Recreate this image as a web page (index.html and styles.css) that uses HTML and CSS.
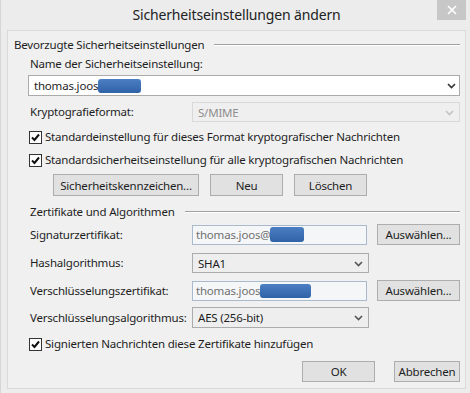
FILE: index.html
```html
<!DOCTYPE html>
<html lang="de">
<head>
<meta charset="utf-8">
<title>Sicherheitseinstellungen ändern</title>
<link rel="stylesheet" href="styles.css">
</head>
<body>
<div class="window">
  <div class="titlebar">
    <div class="title">Sicherheitseinstellungen ändern</div>
    <div class="close"><svg width="10" height="10" viewBox="0 0 10 10"><path d="M1 1 L9 9 M9 1 L1 9" stroke="#fff" stroke-width="1.6" fill="none"/></svg></div>
  </div>
  <div class="panel">
    <div class="group-head"><span>Bevorzugte Sicherheitseinstellungen</span><i class="rule"></i></div>
    <div class="group">
      <div class="label name-label">Name der Sicherheitseinstellung:</div>
      <div class="combo edit name-combo">
        <span class="val">thomas.joos</span><span class="redact r1"></span>
        <svg class="chev" width="9" height="6" viewBox="0 0 9 6"><path d="M1 1 L4.5 4.5 L8 1" stroke="#333" stroke-width="1.6" fill="none"/></svg>
      </div>
      <div class="row krypto">
        <span class="label col">Kryptografieformat:</span>
        <div class="combo disabled wide">
          <span class="val">S/MIME</span>
          <svg class="chev" width="9" height="6" viewBox="0 0 9 6"><path d="M1 1 L4.5 4.5 L8 1" stroke="#c4c4c4" stroke-width="1.6" fill="none"/></svg>
        </div>
      </div>
      <div class="check c1"><span class="box"><svg width="11" height="11" viewBox="0 0 11 11"><path d="M2 5.5 L4.5 8 L9 2.5" stroke="#111" stroke-width="2" fill="none"/></svg></span>Standardeinstellung für dieses Format kryptografischer Nachrichten</div>
      <div class="check c2"><span class="box"><svg width="11" height="11" viewBox="0 0 11 11"><path d="M2 5.5 L4.5 8 L9 2.5" stroke="#111" stroke-width="2" fill="none"/></svg></span>Standardsicherheitseinstellung für alle kryptografischen Nachrichten</div>
      <div class="btnrow">
        <div class="btn b-kenn">Sicherheitskennzeichen...</div>
        <div class="btn b-std">Neu</div>
        <div class="btn b-std">Löschen</div>
      </div>
    </div>
    <div class="group-head head2"><span>Zertifikate und Algorithmen</span><i class="rule"></i></div>
    <div class="group">
      <div class="row r-sig">
        <span class="label col">Signaturzertifikat:</span>
        <div class="field"><span class="val">thomas.joos@</span><span class="redact r2"></span></div>
        <div class="btn b-ausw">Auswählen...</div>
      </div>
      <div class="row r-hash">
        <span class="label col">Hashalgorithmus:</span>
        <div class="combo list">
          <span class="val">SHA1</span>
          <svg class="chev" width="9" height="6" viewBox="0 0 9 6"><path d="M1 1 L4.5 4.5 L8 1" stroke="#555" stroke-width="1.6" fill="none"/></svg>
        </div>
      </div>
      <div class="row r-enc">
        <span class="label col">Verschlüsselungszertifikat:</span>
        <div class="field"><span class="val">thomas.joos</span><span class="redact r3"></span></div>
        <div class="btn b-ausw">Auswählen...</div>
      </div>
      <div class="row r-algo">
        <span class="label col">Verschlüsselungsalgorithmus:</span>
        <div class="combo list tall">
          <span class="val">AES (256-bit)</span>
          <svg class="chev" width="9" height="6" viewBox="0 0 9 6"><path d="M1 1 L4.5 4.5 L8 1" stroke="#555" stroke-width="1.6" fill="none"/></svg>
        </div>
      </div>
      <div class="check c3"><span class="box"><svg width="11" height="11" viewBox="0 0 11 11"><path d="M2 5.5 L4.5 8 L9 2.5" stroke="#111" stroke-width="2" fill="none"/></svg></span>Signierten Nachrichten diese Zertifikate hinzufügen</div>
      <div class="footer">
        <div class="btn b-ok">OK</div>
        <div class="btn b-cancel">Abbrechen</div>
      </div>
    </div>
  </div>
</div>
</body>
</html>
```
FILE: styles.css
```css
* { box-sizing: border-box; }
html, body { margin: 0; padding: 0; }
body {
  width: 470px;
  height: 393px;
  background: #ececec;
  font-family: "Noto Sans", "Open Sans", sans-serif;
  font-size: 11.5px;
  letter-spacing: -0.2px;
  color: #1e1e1e;
  overflow: hidden;
}
.window {
  width: 470px;
  height: 393px;
  border-left: 1px solid #d6d6d6;
  display: flex;
  flex-direction: column;
}
.titlebar {
  height: 30px;
  display: flex;
  align-items: flex-start;
  position: relative;
}
.title {
  flex: 1;
  text-align: center;
  font-size: 14px;
  letter-spacing: -0.15px;
  line-height: 30px;
  color: #222;
  padding-left: 2px;
}
.close {
  position: absolute;
  top: 0;
  right: 4px;
  width: 29px;
  height: 20px;
  background: #c7c7c7;
  display: flex;
  align-items: center;
  justify-content: center;
}
.panel {
  margin-left: 6px;
  width: 459px;
  height: 359px;
  border: 1px solid #dadada;
  background: #f0f0f0;
  padding: 6px 5px 0 6px;
  display: flex;
  flex-direction: column;
}
.group-head {
  height: 16px;
  line-height: 16px;
  display: flex;
  align-items: center;
  gap: 10px;
}
.group-head .rule {
  flex: 1;
  height: 2px;
  border-top: 1px solid #a0a0a0;
  border-bottom: 1px solid #fff;
}
.head2 { margin-top: 8px; padding-left: 16px; }
.group {
  padding-left: 14px;
  display: flex;
  flex-direction: column;
}
.label { line-height: 16px; white-space: nowrap; }
.name-label { margin-top: 3px; padding-left: 2px; }
.col { width: 164px; padding-left: 2px; flex: none; }
.row { display: flex; align-items: center; }
.combo, .field {
  position: relative;
  display: flex;
  align-items: center;
  height: 20px;
  padding-left: 5px;
  white-space: nowrap;
}
.combo .chev { position: absolute; right: 5px; top: 7px; }
.edit {
  margin-top: 3px;
  height: 21px;
  background: #fff;
  border: 1px solid #ababab;
}
.edit .chev { top: 7px; right: 3px; }
.krypto { margin-top: 6px; }
.disabled {
  width: 269px;
  background: #efefef;
  border: 1px solid #d9d9d9;
  color: #8e8e8e;
}
.list {
  width: 177px;
  background: #eeeeee;
  border: 1px solid #acacac;
}
.tall { height: 21px; }
.field {
  width: 177px;
  background: #f4f6f8;
  border: 1px solid #a9bacd;
  color: #707070;
  padding-left: 3px;
}
.redact {
  display: inline-block;
  background: linear-gradient(#4b7ec2, #2f62a6);
  border-radius: 3px;
}
.r1 { width: 43px; height: 14px; }
.r2 { width: 34px; height: 15px; }
.r3 { width: 51px; height: 14px; }
.check {
  display: flex;
  align-items: center;
  height: 16px;
  line-height: 16px;
  white-space: nowrap;
}
.check .box {
  width: 13px;
  height: 13px;
  border: 1px solid #333;
  background: #fff;
  margin-left: 1px;
  margin-right: 3px;
  display: flex;
  align-items: center;
  justify-content: center;
  flex: none;
}
.c1 { margin-top: 7px; }
.c2 { margin-top: 7px; }
.c3 { margin-top: 8px; }
.btn {
  height: 21px;
  background: #e1e1e1;
  border: 1px solid #adadad;
  display: flex;
  align-items: center;
  justify-content: center;
  white-space: nowrap;
  flex: none;
}
.btnrow {
  margin-top: 6px;
  padding-left: 25px;
  display: flex;
  gap: 11px;
}
.btnrow .btn { height: 22px; }
.b-kenn { width: 146px; }
.b-std { width: 73px; }
.b-ausw { width: 83px; margin-left: 10px; }
.r-sig { margin-top: 4px; }
.r-hash { margin-top: 8px; }
.r-enc { margin-top: 7px; }
.r-algo { margin-top: 6px; }
.footer {
  margin-top: 9px;
  display: flex;
  justify-content: flex-end;
  gap: 19px;
}
.b-ok { width: 73px; }
.b-cancel { width: 66px; }
```
